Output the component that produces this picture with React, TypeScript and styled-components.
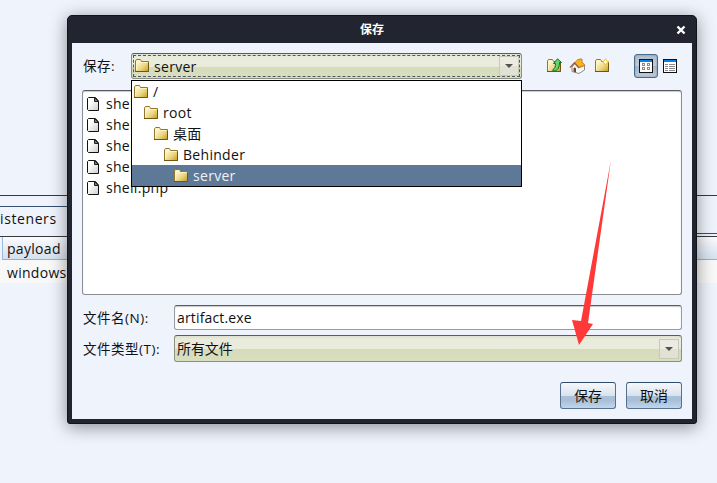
import React from 'react';
import styled, { createGlobalStyle, css } from 'styled-components';

const GlobalStyle = createGlobalStyle`
  * { box-sizing: border-box; }
  body {
    margin: 0;
    overflow: hidden;
    background: #eff3fc;
    color: #111;
    font: 14px/21px "Open Sans", "Noto Sans CJK SC", sans-serif;
    letter-spacing: 0.3px;
  }
`;

const Desktop = styled.div`
  position: relative;
  width: 717px;
  height: 483px;
  overflow: hidden;
  background: #eff3fc;
`;

const Background = styled.div`
  display: flex;
  justify-content: space-between;
  padding-top: 195px;
`;

const Pane = styled.div<{ $width: number }>`
  display: flex;
  flex-direction: column;
  width: ${p => p.$width}px;
  border-top: 1px solid #39393b;
  white-space: nowrap;
`;

const TabStrip = styled.div<{ $offset: number; $height: number }>`
  margin-top: ${p => p.$offset}px;
  height: ${p => p.$height}px;
  border-top: 1px solid #36506e;
  border-bottom: 1px solid #39393b;
  line-height: 24px;
`;

const TabText = styled.span`
  letter-spacing: 0.6px;
`;

const HeaderCell = styled.div<{ $divider?: boolean }>`
  display: flex;
  height: 23px;
  margin-left: ${p => (p.$divider ? 2 : 0)}px;
  padding-left: 4px;
  border-left: ${p => (p.$divider ? '1px solid #9bbbdc' : '0')};
  border-bottom: 1px solid #94b2ce;
  background: linear-gradient(#fafbfd, #e7eef6 50%, #d4e1ee);
  line-height: 23px;
`;

const TableRow = styled.div`
  height: 23px;
  padding-left: 7px;
  background: #f8f8f9;
  line-height: 26px;
`;

const Dialog = styled.section`
  position: absolute;
  left: 67px;
  top: 15px;
  width: 630px;
  height: 409px;
  display: flex;
  flex-direction: column;
  padding: 0 4px 4px;
  border: 1px solid #12141c;
  border-radius: 5px 5px 3px 3px;
  background: #22252f;
  box-shadow: 0 3px 17px rgba(0, 0, 0, 0.43);
`;

const TitleBar = styled.header`
  display: grid;
  grid-template-columns: 24px 1fr 44px;
  align-items: center;
  height: 27px;
  flex: none;
  color: #fff;
  font-size: 12px;
  font-weight: 700;
  letter-spacing: 0;
  text-align: center;
`;

const CloseButton = styled.button`
  display: flex;
  grid-column: 3;
  padding: 0;
  margin-left: 28px;
  border: 0;
  background: none;
`;

const Content = styled.div`
  display: flex;
  flex: 1;
  flex-direction: column;
  padding: 10px 10px 0;
  background: #eff3fc;
`;

const Toolbar = styled.div`
  display: flex;
  align-items: center;
  height: 26px;
`;

const Label = styled.label<{ $width: number }>`
  width: ${p => p.$width}px;
  padding: 1px 0 0 1px;
  flex: none;
  font-size: 13.5px;
  letter-spacing: 0.5px;
  white-space: nowrap;
`;

const LookIn = styled.div`
  position: relative;
  width: 391px;
  flex: none;
`;

const Combo = styled.div<{ $focused?: boolean }>`
  position: relative;
  display: flex;
  align-items: center;
  gap: 4px;
  flex: 1;
  height: ${p => (p.$focused ? 26 : 27)}px;
  padding: 0 2px;
  border: 1px solid #8c8f7c;
  border-top-color: #595c58;
  border-radius: 3px;
  background: linear-gradient(#dddfcf 0, #e9ebdc 3px, #e9ebdc 52%, #d6dbba 53%, #d8debf);
  ${p =>
    p.$focused &&
    css`
      &::after {
        content: '';
        position: absolute;
        inset: 1px;
        border: 1px dashed #4d596b;
      }
    `}
`;

const ComboValue = styled.span`
  flex: 1;
`;

const FileTypeValue = styled(ComboValue)`
  letter-spacing: -0.1px;
`;

const ComboButton = styled.span`
  display: flex;
  align-items: center;
  justify-content: center;
  width: 20px;
  height: 20px;
  border: 1px solid #c8cab9;
  background: linear-gradient(#edeae4 50%, #e1e2d3 52%);
`;

const Popup = styled.ul`
  position: absolute;
  z-index: 2;
  left: 0;
  top: 27px;
  width: 391px;
  margin: 0;
  padding: 0;
  border: 1px solid #000;
  background: #fff;
  list-style: none;
`;

const PopupItem = styled.li<{ $level: number; $selected?: boolean }>`
  display: flex;
  align-items: center;
  gap: 4px;
  height: 21px;
  padding-left: ${p => 1 + p.$level * 10}px;
  background: ${p => (p.$selected ? '#5e7997' : 'transparent')};
  color: ${p => (p.$selected ? '#edf2f7' : '#111')};
`;

const ToolIcons = styled.div`
  display: flex;
  align-items: center;
  gap: 7px;
  margin-left: 24px;
`;

const ViewIcons = styled.div`
  display: flex;
  align-items: center;
  margin-left: auto;
`;

const ViewButton = styled.span<{ $pressed?: boolean }>`
  display: flex;
  align-items: center;
  justify-content: center;
  width: 24px;
  height: 24px;
  border: 1px solid ${p => (p.$pressed ? '#4a6a8c' : 'transparent')};
  border-radius: 3px;
  background: ${p => (p.$pressed ? 'linear-gradient(#aebccb, #c3ced9 50%, #a6b7ca 52%, #bdccdd)' : 'none')};
  box-shadow: ${p => (p.$pressed ? 'inset 0 0 2px #7088a2' : 'none')};
`;

const FileList = styled.div`
  height: 205px;
  margin-top: 11px;
  padding: 2px 4px;
  border: 1px solid #8b8d92;
  border-top-color: #595b5e;
  border-radius: 3px;
  background: #fff;
  box-shadow: inset 0 1px 1px #c9c9c9;
`;

const FileItem = styled.div`
  display: flex;
  align-items: center;
  gap: 6px;
  height: 21px;
`;

const FormRow = styled.div<{ $gap: number }>`
  display: flex;
  align-items: center;
  margin-top: ${p => p.$gap}px;
`;

const TextInput = styled.input`
  width: 508px;
  height: 25px;
  padding: 0 2px;
  border: 1px solid #989ba0;
  border-top-color: #595b5e;
  border-radius: 3px;
  outline: 0;
  background: #fff;
  box-shadow: inset 0 1px 1px #c9c9c9;
  color: #111;
  font: inherit;
  letter-spacing: 0.15px;
`;

const Actions = styled.footer`
  display: flex;
  justify-content: flex-end;
  gap: 10px;
  margin-top: 20px;
`;

const Button = styled.button`
  width: 56px;
  height: 27px;
  padding: 0;
  border: 1px solid #54718f;
  border-top-color: #2f4b68;
  border-radius: 3px;
  background: linear-gradient(#f5f8fb, #d9e3ed 50%, #abc0d8 52%, #a9bfd8 70%, #bfd6ec);
  color: #111;
  font: inherit;
  letter-spacing: 0;
`;

const Pointer = styled.svg`
  position: absolute;
  z-index: 3;
  left: 571px;
  top: 158px;
  pointer-events: none;
`;

const Icon = styled.svg`
  display: block;
  flex: none;
`;

const Gradients = styled.svg`
  position: absolute;
`;

function Folder({ badge }: { badge?: 'up' | 'new' }) {
  return (
    <Icon width="16" height="16" viewBox="0 0 16 16">
      <path d="M1.5 13.5V3L2.5 1.5H6.5L7.5 3.5H14.5V13.5Z" fill="url(#folderFill)" stroke="#93752a" />
      <path d="M2.5 12V4L3 2.5H6L7 4.5H13.5" fill="none" stroke="#fff4ba" />
      <path d="M1 13.5H14.5V5" fill="none" stroke="#725512" />
      {badge === 'up' && (
        <path d="M6.5 12.2C9 10.5 9.5 8.5 9.5 5.5H7.5L11.5 .8 15.5 4.5H13.5C13.5 9 12 12.5 8 13.2Z" fill="#66d46a" stroke="#176c29" />
      )}
      {badge === 'new' && (
        <path d="M11.5.8 12.7 2.8 14.7 4 12.7 5.2 11.5 7.2 10.3 5.2 8.3 4 10.3 2.8Z" fill="#fffbd0" stroke="#f3bd25" />
      )}
    </Icon>
  );
}

function HomeIcon() {
  return (
    <Icon width="18" height="17" viewBox="0 0 18 17">
      <path d="M3 9 6 5.5 10.5 9.5 15.5 7.5V12L10 15.5 3 13.5Z" fill="#f7f7f6" stroke="#8a8a8a" />
      <path d="M5.5 5 9 1.2 10.2 2V1H13v3L16 7.2 10.2 9.3Z" fill="#fcb21c" stroke="#ba750c" strokeWidth=".8" />
      <path d="M1 9.5 5.5 4.8 10 10" fill="none" stroke="#9c6331" strokeWidth="1.3" />
      <path d="M4.5 13.5V10.5L5.7 9.3 7 10.5V14.3Z" fill="#7a3a18" />
    </Icon>
  );
}

function FileIcon() {
  return (
    <Icon width="13" height="14" viewBox="0 0 13 14">
      <path d="M1.5.5H8.5L11.5 4V13.5H1.5L.5 12.5V1.5Z" fill="url(#fileFill)" stroke="#111" />
      <path d="M7.5.5V4.5H11.5Z" fill="#777" stroke="#222" />
    </Icon>
  );
}

function ViewIcon({ details }: { details?: boolean }) {
  return (
    <Icon width="14" height="14" viewBox="0 0 14 14" shapeRendering="crispEdges">
      <path d="M.5.5H13.5V13.5H.5Z" fill="#fff" stroke="#111" />
      <path d="M1 1H13V3H1Z" fill="#087fe6" />
      {details ? (
        <path d="M2 5.5H5M6 5.5H12M2 7.5H5M6 7.5H12M2 9.5H5M6 9.5H12M2 11.5H5M6 11.5H12" stroke="#8a8a8a" />
      ) : (
        <path d="M3.5 4.5H5.5V6.5H3.5ZM8.5 4.5H10.5V6.5H8.5ZM3.5 8.5H5.5V10.5H3.5ZM8.5 8.5H10.5V10.5H8.5Z" fill="#fff" stroke="#8a8a8a" />
      )}
    </Icon>
  );
}

function DropArrow() {
  return (
    <ComboButton>
      <Icon width="8" height="4" viewBox="0 0 8 4"><path d="M0 0H8L4 4Z" fill="#505450" /></Icon>
    </ComboButton>
  );
}

const folders = ['/', 'root', '桌面', 'Behinder', 'server'];
const files = ['shell.asp', 'shell.aspx', 'shell.jsp', 'shell.jspx', 'shell.php'];

export default function App() {
  return (
    <Desktop>
      <GlobalStyle />
      <Gradients width="0" height="0">
        <defs>
          <linearGradient id="folderFill" x2="1" y2="1">
            <stop offset=".15" stopColor="#fff9dd" /><stop offset=".6" stopColor="#ead680" /><stop offset="1" stopColor="#c59a1c" />
          </linearGradient>
          <linearGradient id="fileFill" x2="1" y2="1">
            <stop offset=".3" stopColor="#fff" /><stop offset="1" stopColor="#ccc" />
          </linearGradient>
        </defs>
      </Gradients>
      <Background>
        <Pane $width={72}>
          <TabStrip $offset={10} $height={31}><TabText>isteners</TabText></TabStrip>
          <HeaderCell $divider>payload</HeaderCell>
          <TableRow>windows</TableRow>
        </Pane>
        <Pane $width={25}>
          <TabStrip $offset={37} $height={4} />
          <HeaderCell />
          <TableRow />
        </Pane>
      </Background>
      <Dialog>
        <TitleBar>
          <span />
          <span>保存</span>
          <CloseButton aria-label="关闭">
            <Icon width="10" height="10" viewBox="0 0 10 10"><path d="M1.5 1.5 8.5 8.5M8.5 1.5 1.5 8.5" stroke="#fff" strokeWidth="2.4" /></Icon>
          </CloseButton>
        </TitleBar>
        <Content>
          <Toolbar>
            <Label $width={49}>保存:</Label>
            <LookIn>
              <Combo $focused>
                <Folder />
                <ComboValue>server</ComboValue>
                <DropArrow />
              </Combo>
              <Popup>
                {folders.map((name, level) => (
                  <PopupItem key={name} $level={level} $selected={level === 4}><Folder />{name}</PopupItem>
                ))}
              </Popup>
            </LookIn>
            <ToolIcons><Folder badge="up" /><HomeIcon /><Folder badge="new" /></ToolIcons>
            <ViewIcons>
              <ViewButton $pressed><ViewIcon /></ViewButton>
              <ViewButton><ViewIcon details /></ViewButton>
            </ViewIcons>
          </Toolbar>
          <FileList>
            {files.map(name => <FileItem key={name}><FileIcon />{name}</FileItem>)}
          </FileList>
          <FormRow $gap={10}><Label $width={92}>文件名(N):</Label><TextInput defaultValue="artifact.exe" /></FormRow>
          <FormRow $gap={5}>
            <Label $width={92}>文件类型(T):</Label>
            <Combo><FileTypeValue>所有文件</FileTypeValue><DropArrow /></Combo>
          </FormRow>
          <Actions><Button>保存</Button><Button>取消</Button></Actions>
        </Content>
      </Dialog>
      <Pointer width="42" height="190" viewBox="0 0 42 190">
        <path d="M40 2 17 165 22 166 8 187 1 162 10 163Z" fill="#ff3838" />
      </Pointer>
    </Desktop>
  );
}
